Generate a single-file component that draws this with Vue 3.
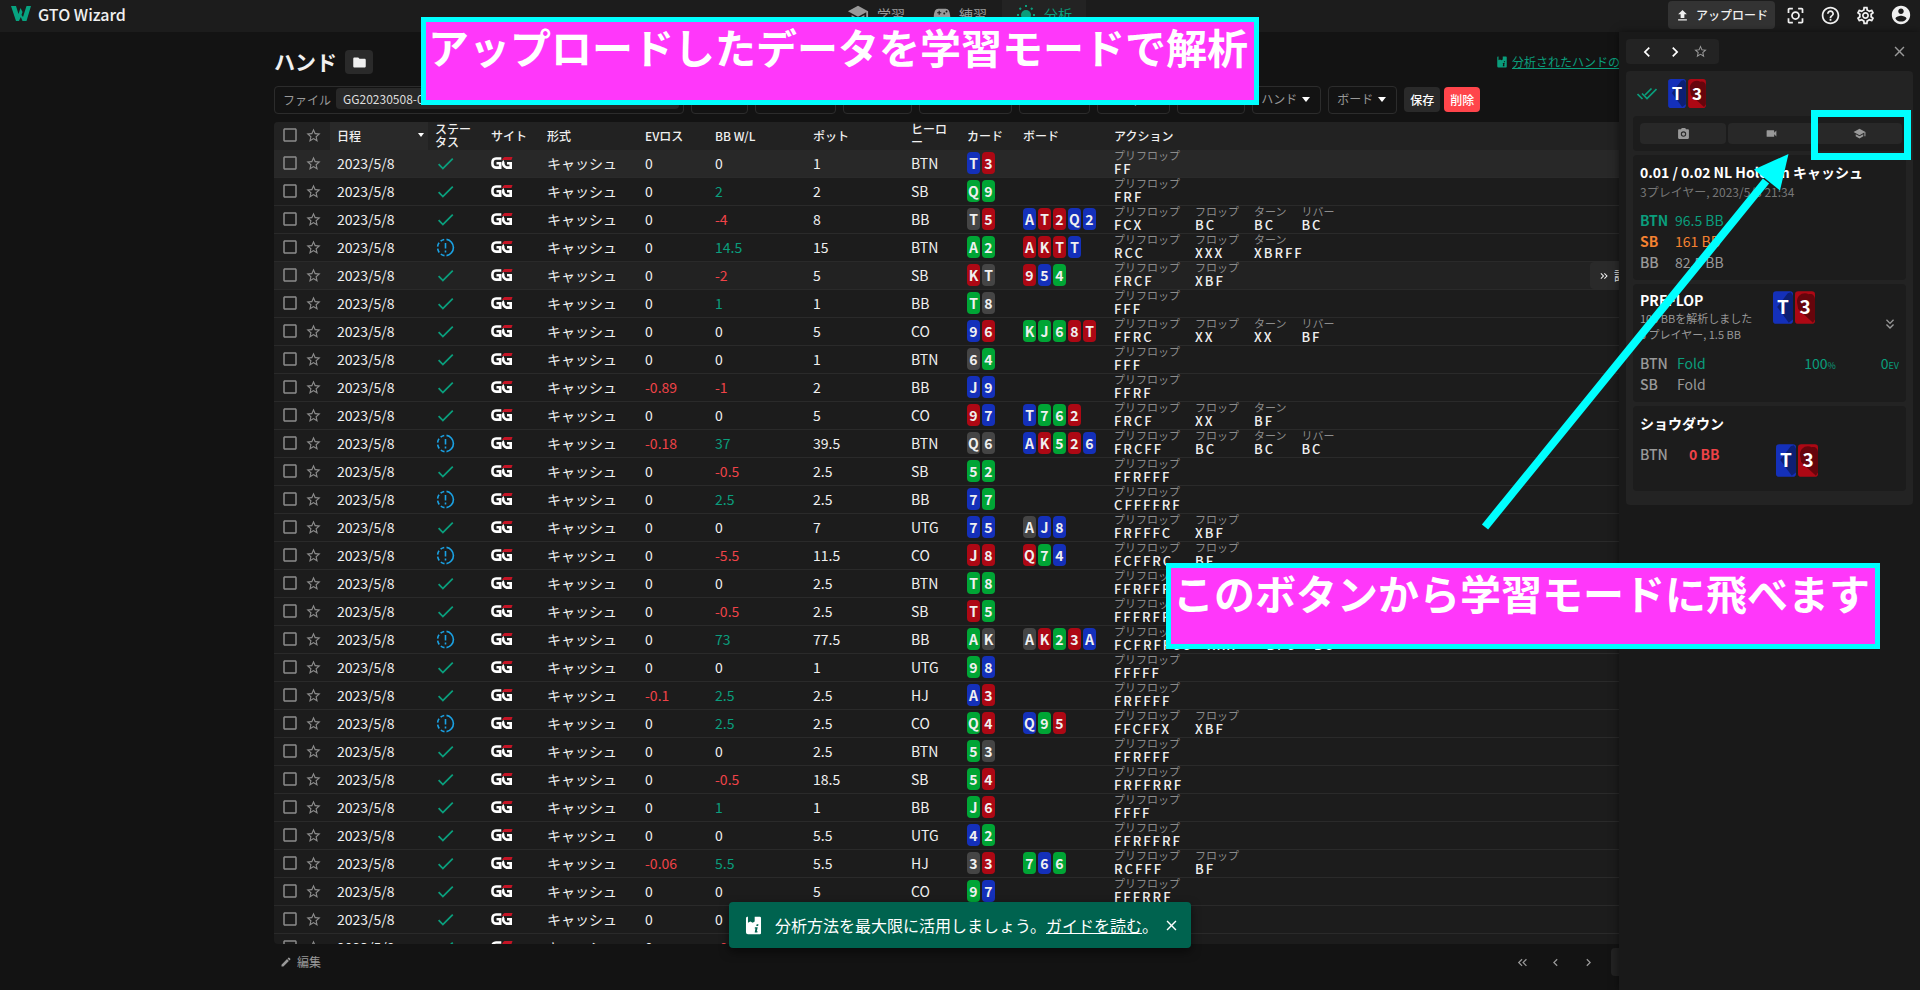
<script setup>
import { h } from 'vue'

const suitNames = { b: 'diamond', r: 'heart', g: 'club', k: 'spade' }
const streetNames = ['プリフロップ', 'フロップ', 'ターン', 'リバー']

// status | EV loss | BB won/lost | pot | hero | hole cards | board | actions per street
const source = [
  'ok|0|0|1|BTN|Tb 3r||FF',
  'ok|0|2|2|SB|Qg 9g||FRF',
  'ok|0|-4|8|BB|Tk 5r|Ab Tr 2r Qb 2b|FCX BC BC BC',
  'part|0|14.5|15|BTN|Ag 2g|Ar Kr Tr Tb|RCC XXX XBRFF',
  'ok|0|-2|5|SB|Kr Tk|9r 5b 4g|FRCF XBF',
  'ok|0|1|1|BB|Tg 8k||FFF',
  'ok|0|0|5|CO|9b 6r|Kg Jg 6g 8r Tr|FFRC XX XX BF',
  'ok|0|0|1|BTN|6k 4g||FFF',
  'ok|-0.89|-1|2|BB|Jb 9b||FFRF',
  'ok|0|0|5|CO|9r 7b|Tb 7g 6g 2r|FRCF XX BF',
  'part|-0.18|37|39.5|BTN|Qk 6k|Ab Kr 5g 2r 6b|FRCFF BC BC BC',
  'ok|0|-0.5|2.5|SB|5g 2g||FFRFFF',
  'part|0|2.5|2.5|BB|7b 7g||CFFFFRF',
  'ok|0|0|7|UTG|7b 5b|Ak Jb 8b|FRFFFC XBF',
  'part|0|-5.5|11.5|CO|Jr 8r|Qr 7g 4b|FCFFRC BF',
  'ok|0|0|2.5|BTN|Tg 8g||FFRFFF',
  'ok|0|-0.5|2.5|SB|Tr 5g||FFFRFF',
  'part|0|73|77.5|BB|Ag Kk|Ak Kr 2g 3r Ab|FCFRFFCC XXX BFC BC',
  'ok|0|0|1|UTG|9g 8b||FFFFF',
  'ok|-0.1|2.5|2.5|HJ|Ab 3r||FRFFFF',
  'part|0|2.5|2.5|CO|Qg 4r|Qb 9g 5r|FFCFFX XBF',
  'ok|0|0|2.5|BTN|5g 3k||FFRFFF',
  'ok|0|-0.5|18.5|SB|5g 4r||FRFFRRF',
  'ok|0|1|1|BB|Jg 6r||FFFF',
  'ok|0|0|5.5|UTG|4b 2g||FFRFFRF',
  'ok|-0.06|5.5|5.5|HJ|3k 3r|7g 6b 6g|RCFFF BF',
  'ok|0|0|5|CO|9g 7b||FFFRRF',
  'ok|0|0|2.5||||',
  'ok|0|-0.5|2.5||||'
]
const split = (s) => (s ? s.split(' ') : [])
const cards = (s) => split(s).map((c) => ({ rank: c[0], suit: suitNames[c[1]] }))
const hands = source.map((line) => {
  const [status, ev, bb, pot, hero, hole, board, acts] = line.split('|')
  return {
    status, ev, bb, pot, hero,
    hole: cards(hole),
    board: cards(board),
    streets: split(acts).map((a, i) => ({ name: streetNames[i], acts: a }))
  }
})
const tone = (v) => (Number(v) > 0 ? 'gain' : Number(v) < 0 ? 'loss' : '')

const filters = ['日程', 'ヒーロー', 'サイト', 'ステータス', 'EVロス', 'BB W/L', 'アクト', 'ハンド', 'ボード']

const paths = {
  star: 'M22 9.24l-7.19-.62L12 2 9.19 8.63 2 9.24l5.46 4.73L5.82 21 12 17.27 18.18 21l-1.63-7.03L22 9.24zM12 15.4l-3.76 2.27 1-4.28-3.32-2.88 4.38-.38L12 6.1l1.71 4.04 4.38.38-3.32 2.88 1 4.28L12 15.4z',
  box: 'M19 5v14H5V5h14m0-2H5c-1.1 0-2 .9-2 2v14c0 1.1.9 2 2 2h14c1.1 0 2-.9 2-2V5c0-1.1-.9-2-2-2z',
  check: 'M9 16.17L4.83 12l-1.42 1.41L9 19 21 7l-1.41-1.41z',
  folder: 'M10 4H4c-1.1 0-2 .9-2 2v12c0 1.1.9 2 2 2h16c1.1 0 2-.9 2-2V8c0-1.1-.9-2-2-2h-8l-2-2z',
  school: 'M5 13.18v4L12 21l7-3.82v-4L12 17l-7-3.82zM12 3L1 9l11 6 9-4.91V17h2V9L12 3z',
  game: 'M17 5H7C3 5 1.5 9 1 15c-.3 4 3 5 5 3l2-2h8l2 2c2 2 5.3 1 5-3-.5-6-2-10-6-10zM11 11H9v2H7.5v-2h-2V9.5h2v-2H9v2h2zm4 1.5a1.3 1.3 0 110-2.6 1.3 1.3 0 010 2.6zm3-2.5a1.3 1.3 0 110-2.6 1.3 1.3 0 010 2.6z',
  upload: 'M5 20h14v-2H5v2zM5 10h4v6h6v-6h4l-7-7-7 7z',
  focus: 'M5 15H3v4c0 1.1.9 2 2 2h4v-2H5v-4zM5 5h4V3H5c-1.1 0-2 .9-2 2v4h2V5zm14-2h-4v2h4v4h2V5c0-1.1-.9-2-2-2zm0 16h-4v2h4c1.1 0 2-.9 2-2v-4h-2v4zM12 7c-2.76 0-5 2.24-5 5s2.24 5 5 5 5-2.24 5-5-2.24-5-5-5zm0 8a3 3 0 110-6 3 3 0 010 6z',
  help: 'M11 18h2v-2h-2v2zm1-16C6.48 2 2 6.48 2 12s4.48 10 10 10 10-4.48 10-10S17.52 2 12 2zm0 18c-4.41 0-8-3.59-8-8s3.59-8 8-8 8 3.59 8 8-3.59 8-8 8zm0-14c-2.21 0-4 1.79-4 4h2c0-1.1.9-2 2-2s2 .9 2 2c0 2-3 1.75-3 5h2c0-2.25 3-2.5 3-5 0-2.21-1.79-4-4-4z',
  gear: 'M19.43 12.98c.04-.32.07-.64.07-.98s-.03-.66-.07-.98l2.11-1.65c.19-.15.24-.42.12-.64l-2-3.46c-.12-.22-.39-.3-.61-.22l-2.49 1c-.52-.4-1.08-.73-1.69-.98l-.38-2.65C14.46 2.18 14.25 2 14 2h-4c-.25 0-.46.18-.49.42l-.38 2.65c-.61.25-1.17.59-1.69.98l-2.49-1c-.23-.09-.49 0-.61.22l-2 3.46c-.13.22-.07.49.12.64l2.11 1.65c-.04.32-.07.65-.07.98s.03.66.07.98l-2.11 1.65c-.19.15-.24.42-.12.64l2 3.46c.12.22.39.3.61.22l2.49-1c.52.4 1.08.73 1.69.98l.38 2.65c.03.24.24.42.49.42h4c.25 0 .46-.18.49-.42l.38-2.65c.61-.25 1.17-.59 1.69-.98l2.49 1c.23.09.49 0 .61-.22l2-3.46c.12-.22.07-.49-.12-.64l-2.11-1.65zm-1.98-1.71c.04.31.05.52.05.73s-.02.43-.05.73l-.14 1.13.89.7 1.08.84-.7 1.21-1.27-.51-1.04-.42-.9.68c-.43.32-.84.56-1.25.73l-1.06.43-.16 1.13-.2 1.35h-1.4l-.19-1.35-.16-1.13-1.06-.43c-.43-.18-.83-.41-1.23-.71l-.91-.7-1.06.43-1.27.51-.7-1.21 1.08-.84.89-.7-.14-1.13c-.03-.31-.05-.54-.05-.74s.02-.43.05-.73l.14-1.13-.89-.7-1.08-.84.7-1.21 1.27.51 1.04.42.9-.68c.43-.32.84-.56 1.25-.73l1.06-.43.16-1.13.2-1.35h1.39l.19 1.35.16 1.13 1.06.43c.43.18.83.41 1.23.71l.91.7 1.06-.43 1.27-.51.7 1.21-1.07.85-.89.7.14 1.13zM12 8c-2.21 0-4 1.79-4 4s1.79 4 4 4 4-1.79 4-4-1.79-4-4-4zm0 6c-1.1 0-2-.9-2-2s.9-2 2-2 2 .9 2 2-.9 2-2 2z',
  account: 'M12 2C6.48 2 2 6.48 2 12s4.48 10 10 10 10-4.48 10-10S17.52 2 12 2zm0 3c1.66 0 3 1.34 3 3s-1.34 3-3 3-3-1.34-3-3 1.34-3 3-3zm0 14.2c-2.5 0-4.71-1.28-6-3.22.03-1.99 4-3.08 6-3.08 1.99 0 5.97 1.09 6 3.08-1.29 1.94-3.5 3.22-6 3.22z',
  left: 'M15.41 7.41L14 6l-6 6 6 6 1.41-1.41L10.83 12z',
  right: 'M10 6L8.59 7.41 13.17 12l-4.58 4.59L10 18l6-6z',
  close: 'M19 6.41L17.59 5 12 10.59 6.41 5 5 6.41 10.59 12 5 17.59 6.41 19 12 13.41 17.59 19 19 17.59 13.41 12z',
  camera: 'M9 2L7.17 4H4c-1.1 0-2 .9-2 2v14c0 1.1.9 2 2 2h16c1.1 0 2-.9 2-2V6c0-1.1-.9-2-2-2h-3.17L15 2H9zm3 16a5 5 0 110-10 5 5 0 010 10zm0-2a3 3 0 100-6 3 3 0 000 6z',
  video: 'M17 10.5V7c0-.55-.45-1-1-1H4c-.55 0-1 .45-1 1v10c0 .55.45 1 1 1h12c.55 0 1-.45 1-1v-3.5l4 4v-11l-4 4z',
  book: 'M5 1V8.500l3-1.500 3 1.500 2.500-1.500V1H20a1.500 1.500 0 011.500 1.500V21.500A1.500 1.500 0 0120 23H5a2.500 2.500 0 01-2.500-2.500V3A2 2 0 014 1zM16 10.500l-.5 2.200h2.300l.5-2.200zm-2.200 3.700l-.3 1.500h1l-1 5h3.400l.3-1.500h-1l1.100-5z',
  pencil: 'M3 17.25V21h3.75L17.81 9.94l-3.75-3.75L3 17.25zM20.71 7.04c.39-.39.39-1.02 0-1.41l-2.34-2.34c-.39-.39-1.02-.39-1.41 0l-1.83 1.83 3.75 3.75 1.83-1.83z',
  doubleRight: 'M6.4 6L5 7.4 9.6 12 5 16.6 6.4 18l6-6zm7 0L12 7.4l4.6 4.6-4.6 4.6 1.4 1.4 6-6z',
  doubleLeft: 'M17.6 6L19 7.4 14.4 12l4.6 4.6-1.4 1.4-6-6zm-7 0L12 7.4 7.4 12l4.6 4.6-1.4 1.4-6-6z',
  doubleDown: 'M18 6.4L16.6 5 12 9.6 7.4 5 6 6.4l6 6zm0 7L16.6 12 12 16.6 7.4 12 6 13.4l6 6z'
}
const Icon = (props) =>
  h('svg', { viewBox: '0 0 24 24', width: props.size, height: props.size, fill: 'currentColor', 'aria-hidden': 'true' }, [
    h('path', { d: paths[props.name], 'fill-rule': 'evenodd' })
  ])
Icon.props = ['name', 'size']

const faces = {
  T: { fill: '#1430ba', shade: '#0d1f73', d: 'M4 15 14 2 17 1 19 4V27L15 30Z' },
  3: { fill: '#ad0814', shade: '#66050c', d: 'M2 11C1 3 9 0 13 3 16 2 19 4 19 8V27L17 30 3 17Z' }
}
const BigCard = (props) =>
  h('svg', { viewBox: '0 0 19 31', width: props.size, height: Math.round((props.size * 31) / 19), role: 'img', 'aria-label': props.rank }, [
    h('rect', { width: 19, height: 31, rx: 3, fill: faces[props.rank].fill }),
    h('path', { d: faces[props.rank].d, fill: faces[props.rank].shade }),
    h('text', { x: 9.5, y: 22, 'text-anchor': 'middle', fill: '#fff', 'font-size': 18, 'font-weight': 700 }, props.rank)
  ])
BigCard.props = ['rank', 'size']
</script>

<template>
  <div class="page">
    <header class="top">
      <a class="brand" href="#">
        <svg width="20" height="16" viewBox="0 0 20 16" aria-hidden="true">
          <path d="M0 0h5l2.500 8L9.500 2l2 4-1 3 1.500 2L15.500 0H20l-4.500 15h-4L9.800 11 8 15H5z" fill="#07a380" />
        </svg>
        <span>GTO Wizard</span>
      </a>
      <nav class="tabs">
        <a href="#"><Icon name="school" :size="22" /><span>学習</span></a>
        <a href="#"><Icon name="game" :size="18" /><span>練習</span></a>
        <a href="#" class="on">
          <svg width="20" height="20" viewBox="0 0 20 20" aria-hidden="true" fill="none" stroke="currentColor" stroke-width="2">
            <circle cx="10" cy="11" r="5" fill="currentColor" stroke="none" />
            <path d="M10 1v2M3.500 4l1.500 1.500M16.500 4L15 5.500M1 11h2M17 11h2M7 17h6" />
          </svg>
          <span>分析</span>
        </a>
      </nav>
      <div class="tools">
        <button class="upload"><Icon name="upload" :size="15" /><span>アップロード</span></button>
        <button aria-label="スクリーン"><Icon name="focus" :size="21" /></button>
        <button aria-label="ヘルプ"><Icon name="help" :size="21" /></button>
        <button aria-label="設定"><Icon name="gear" :size="21" /></button>
        <button aria-label="アカウント"><Icon name="account" :size="22" /></button>
      </div>
    </header>

    <main class="main">
      <div class="heading">
        <h1>ハンド</h1>
        <button class="folder" aria-label="フォルダ"><Icon name="folder" :size="15" /></button>
        <a class="guide" href="#"><Icon name="book" :size="12" /><span>分析されたハンドの見方</span></a>
      </div>

      <div class="filters">
        <div class="file"><span>ファイル</span><button class="chip">GG20230508-0407</button></div>
        <button v-for="f in filters" :key="f" class="filter">
          <span>{{ f }}</span>
          <svg width="8" height="5" viewBox="0 0 8 5" aria-hidden="true"><path d="M0 0h8L4 5z" fill="#fff" /></svg>
        </button>
        <div class="pair">
          <button class="save">保存</button>
          <button class="delete">削除</button>
        </div>
      </div>

      <div class="sheet">
        <table>
          <colgroup>
            <col class="w-pick" /><col class="w-l" /><col class="w-s" /><col class="w-s" /><col class="w-l" />
            <col class="w-m" /><col class="w-l" /><col class="w-l" /><col class="w-s" /><col class="w-s" />
            <col class="w-b" /><col />
          </colgroup>
          <thead>
            <tr>
              <th>
                <div class="pick">
                  <label class="tick"><input type="checkbox" aria-label="すべて選択" /><Icon name="box" :size="18" /></label>
                  <button aria-label="お気に入り"><Icon name="star" :size="17" /></button>
                </div>
              </th>
              <th class="sorted">
                <div class="sort"><span>日程</span><svg width="6" height="4" viewBox="0 0 6 4" aria-hidden="true"><path d="M0 0h6L3 4z" fill="#fff" /></svg></div>
              </th>
              <th>ステータス</th><th>サイト</th><th>形式</th><th>EVロス</th><th>BB W/L</th><th>ポット</th>
              <th>ヒーロー</th><th>カード</th><th>ボード</th><th>アクション</th>
            </tr>
          </thead>
          <tbody>
            <tr v-for="(r, i) in hands" :key="i" :class="{ selected: i === 0, hover: i === 4 }">
              <td>
                <div class="pick">
                  <label class="tick"><input type="checkbox" :aria-label="'ハンド ' + (i + 1)" /><Icon name="box" :size="18" /></label>
                  <button aria-label="お気に入り"><Icon name="star" :size="17" /></button>
                </div>
              </td>
              <td>2023/5/8</td>
              <td class="status">
                <Icon v-if="r.status === 'ok'" name="check" :size="21" />
                <svg v-else class="part" width="20" height="19" viewBox="-1 0 20 19" fill="none" stroke="currentColor" stroke-width="1.600" aria-hidden="true">
                  <path d="M10.500 1.400A8.200 8.200 0 0110.500 17.600" />
                  <path d="M8.500 17.600A8.200 8.200 0 018.500 1.400" stroke-dasharray="4 2.200" />
                  <path d="M9.500 5v5.500M9.500 12.500v2" />
                </svg>
              </td>
              <td class="site">
                <svg width="22" height="12" viewBox="0 0 22 12" role="img" aria-label="GG" fill="none" stroke="#fff" stroke-width="2.600">
                  <path d="M10.300 1.500H5Q1.400 1.500 1.400 6T5 10.600H9.200V6.300H5.500" />
                  <path d="M13 4.200Q12.200 4.500 12.200 6.800T15.500 10.600H19.700V6.300H16" />
                  <path d="M13.500 0H21.500L20.500 3H11Q12 .5 13.500 0z" fill="#c41425" stroke="none" />
                </svg>
              </td>
              <td>キャッシュ</td>
              <td :class="tone(r.ev)">{{ r.ev }}</td>
              <td :class="tone(r.bb)">{{ r.bb }}</td>
              <td>{{ r.pot }}</td>
              <td>{{ r.hero }}</td>
              <td><div class="cards"><b v-for="(c, n) in r.hole" :key="n" :class="c.suit">{{ c.rank }}</b></div></td>
              <td><div class="cards"><b v-for="(c, n) in r.board" :key="n" :class="c.suit">{{ c.rank }}</b></div></td>
              <td class="action">
                <div class="streets">
                  <div v-for="s in r.streets" :key="s.name"><small>{{ s.name }}</small><em>{{ s.acts }}</em></div>
                </div>
                <button v-if="i === 4" class="detail"><Icon name="doubleRight" :size="12" /><span>詳細</span></button>
              </td>
            </tr>
          </tbody>
        </table>
      </div>

      <footer class="foot">
        <button class="edit"><Icon name="pencil" :size="12" /><span>編集</span></button>
        <div class="pager">
          <button aria-label="最初"><Icon name="doubleLeft" :size="15" /></button>
          <button aria-label="前へ"><Icon name="left" :size="15" /></button>
          <button aria-label="次へ"><Icon name="right" :size="15" /></button>
          <button class="current" aria-label="現在のページ"></button>
        </div>
      </footer>
    </main>

    <aside class="panel">
      <div class="panel-bar">
        <div class="steps">
          <button aria-label="前のハンド"><Icon name="left" :size="20" /></button>
          <button aria-label="次のハンド"><Icon name="right" :size="20" /></button>
          <button aria-label="お気に入り" class="dim fav"><Icon name="star" :size="15" /></button>
        </div>
        <button class="dim" aria-label="閉じる"><Icon name="close" :size="17" /></button>
      </div>
      <section class="card">
        <div class="hole">
          <svg width="20" height="13" viewBox="0 0 20 13" fill="none" stroke="#0a9e7c" stroke-width="1.700" aria-hidden="true">
            <path d="M.5 7l5 5M5 6.500l5 5L19.500 2M8 8L14.500 1.500" />
          </svg>
          <div class="duo"><BigCard rank="T" :size="18" /><BigCard rank="3" :size="18" /></div>
        </div>
        <div class="box media">
          <button aria-label="画像"><Icon name="camera" :size="13" /></button>
          <button aria-label="動画"><Icon name="video" :size="13" /></button>
          <button aria-label="学習"><Icon name="school" :size="13" /></button>
        </div>
        <div class="box info">
          <h2>0.01 / 0.02 NL Holdem キャッシュ</h2>
          <p class="when">3プレイヤー, 2023/5/8 21:34</p>
          <dl>
            <div class="green"><dt>BTN</dt><dd>96.5 BB</dd></div>
            <div class="orange"><dt>SB</dt><dd>161 BB</dd></div>
            <div><dt>BB</dt><dd>82.5 BB</dd></div>
          </dl>
        </div>
        <div class="box preflop">
          <div class="row">
            <div class="about">
              <h2>PREFLOP</h2>
              <p>100 BBを解析しました</p>
              <p>3 プレイヤー, 1.5 BB</p>
            </div>
            <div class="duo"><BigCard rank="T" :size="20" /><BigCard rank="3" :size="20" /></div>
            <button class="dim more" aria-label="展開"><Icon name="doubleDown" :size="16" /></button>
          </div>
          <dl>
            <div><dt>BTN</dt><dd class="green">Fold</dd><dd class="green pct">100<small>%</small></dd><dd class="green">0<small>EV</small></dd></div>
            <div><dt>SB</dt><dd>Fold</dd></div>
          </dl>
        </div>
        <div class="box show">
          <h2>ショウダウン</h2>
          <div class="row">
            <span class="seat">BTN</span><strong>0 BB</strong>
            <div class="duo"><BigCard rank="T" :size="20" /><BigCard rank="3" :size="20" /></div>
          </div>
        </div>
      </section>
    </aside>

    <div class="toast" role="status">
      <Icon name="book" :size="19" />
      <p>分析方法を最大限に活用しましょう。<a href="#">ガイドを読む</a>。</p>
      <button aria-label="閉じる"><Icon name="close" :size="17" /></button>
    </div>

    <div class="callout first">アップロードしたデータを学習モードで解析</div>
    <div class="callout second">このボタンから学習モードに飛べます</div>
    <div class="ring"></div>
    <svg class="arrow" width="310" height="380" viewBox="0 0 310 380" aria-hidden="true">
      <path d="M5 377 286 31" stroke="#0ff" stroke-width="8" />
      <path d="M308.500 4 274 19.500 300 40.500z" fill="#0ff" />
    </svg>
  </div>
</template>

<style>
body { background: #131313; overflow: hidden; }
</style>

<style scoped>
.page {
  position: relative; display: flex; flex-direction: column; height: 100vh; overflow: hidden;
  background: #131313; color: #f0f0f0;
  font-family: "Noto Sans CJK JP", "Noto Sans", sans-serif; font-size: 14px; line-height: 20px;
}
.page * { box-sizing: border-box; }
button { font: inherit; color: inherit; background: none; border: 0; padding: 0; display: flex; align-items: center; justify-content: center; white-space: nowrap; }
a { color: inherit; text-decoration: none; }
h1, h2, p, dl, dd { margin: 0; }
svg { display: block; flex: none; }

.top { display: grid; grid-template-columns: 1fr auto 1fr; height: 32px; background: #1c1c1c; flex: none; }
.brand { display: flex; align-items: center; gap: 7px; padding-left: 11px; padding-bottom: 4px; font-size: 16px; font-weight: 500; }
.tabs { display: flex; }
.tabs a { width: 84px; height: 32px; padding-bottom: 4px; display: flex; align-items: center; justify-content: center; gap: 8px; color: #999; }
.tabs a.on { background: #232323; color: #0a9e7c; }
.tools { display: flex; justify-content: flex-end; padding: 1px 2px 3px 0; }
.tools button { width: 35px; height: 28px; }
.tools .upload { width: 107px; margin-right: 3px; gap: 6px; background: #333; border-radius: 4px; font-size: 12px; font-weight: 500; }

.main { width: 100%; max-width: 1372px; margin: 0 auto; flex: 1; min-height: 0; display: flex; flex-direction: column; padding-top: 16px; }
.heading { display: flex; align-items: center; height: 28px; flex: none; }
h1 { font-size: 21px; line-height: 26px; padding-bottom: 2px; font-weight: 700; }
.folder { width: 28px; height: 24px; margin-left: 8px; background: #2a2a2a; border-radius: 4px; }
.guide { margin-left: auto; margin-right: 2px; display: flex; align-items: center; gap: 4px; color: #0a9e7c; font-size: 12px; }
.guide span { text-decoration: underline; }

.filters { display: flex; gap: 7px; margin-top: 10px; height: 28px; flex: none; font-size: 12px; color: #999; }
.file, .filter { border: 1px solid #2c2c2c; border-radius: 4px; }
.file { display: flex; padding: 1px 4px 0 8px; gap: 5px; line-height: 24px; }
.chip { width: 343px; height: 21px; padding-left: 7px; justify-content: flex-start; background: #282828; color: #ddd; border-radius: 4px; }
.filter { padding: 0 10px 2px 8px; gap: 5px; }
.pair { display: flex; gap: 4px; padding-top: 1px; font-weight: 500; color: #fff; }
.pair button { height: 25px; padding: 0 6px; border-radius: 4px; }
.save { background: #2a2a2a; }
.delete { background: #ff454b; }

.sheet { margin-top: 8px; flex: 1; min-height: 0; overflow: hidden; background: #1c1c1c; border-radius: 4px; }
table { width: 100%; table-layout: fixed; border-collapse: collapse; }
.w-pick { width: 56px; } .w-s { width: 56px; } .w-m { width: 70px; } .w-b { width: 91px; } .w-l { width: 98px; }
th { height: 28px; padding: 0 7px 2px; background: #222; font-size: 12px; line-height: 13px; font-weight: 500; text-align: left; }
th.sorted { background: #292929; padding-right: 4px; }
.sort { display: flex; align-items: center; justify-content: space-between; }
td { height: 28px; padding: 0 7px 2px; line-height: 20px; white-space: nowrap; box-shadow: inset 0 -1px #2a2a2a; }
tr.selected td { background: #282828; }
tr.hover td { background: #222; }
.pick { display: flex; align-items: center; gap: 6px; color: #8c8c8c; }
.tick { position: relative; display: block; }
.tick input { position: absolute; inset: 0; margin: 0; opacity: 0; }
.status { color: #0a9e7c; }
.part { color: #1aa2e4; }
.gain { color: #0a9e7c; }
.loss { color: #ef4348; }
.cards { display: flex; gap: 2px; }
.cards b { width: 13px; height: 22px; border-radius: 4px; line-height: 22px; font-size: 14px; text-align: center; }
.diamond { background: #1430ba; } .heart { background: #ad0814; } .club { background: #00a535; } .spade { background: #454545; }
td.action { position: relative; padding-bottom: 0; }
.streets { display: flex; gap: 15px; }
.streets small { display: block; font-size: 11px; line-height: 10px; color: #8c8c8c; }
.streets em { display: block; font-style: normal; font-size: 13px; line-height: 18px; font-weight: 500; letter-spacing: 2px; }
.detail { position: absolute; right: 0; top: 0; width: 56px; height: 27px; gap: 4px; background: #2a2a2a; border-radius: 4px; font-size: 12px; }

.foot { display: flex; justify-content: space-between; align-items: center; height: 46px; padding-bottom: 10px; flex: none; font-size: 12px; color: #999; }
.edit { padding-left: 6px; gap: 5px; }
.pager { display: flex; }
.pager button { width: 33px; height: 28px; }
.pager .current { width: 35px; margin-left: 6px; background: #222; border-radius: 4px; }

.panel { position: absolute; top: 32px; right: 0; bottom: 0; width: 301px; padding: 7px; background: #191919; box-shadow: 0 0 8px rgba(0, 0, 0, .5); color: #999; }
.dim { color: #999; }
.panel-bar { display: flex; justify-content: space-between; align-items: center; height: 25px; padding-right: 5px; }
.steps { display: flex; width: 93px; height: 25px; padding: 0 7px; background: #232323; border-radius: 4px; color: #fff; }
.steps button { width: 28px; }
.steps .fav { width: 22px; }
.card { margin-top: 7px; padding: 8px 7px 14px; background: #232323; border-radius: 4px; }
.hole { display: flex; align-items: center; gap: 11px; padding-left: 4px; }
.duo { display: flex; gap: 2px; }
.box { background: #1c1c1c; border-radius: 4px; padding: 7px; margin-top: 4px; }
.media { display: grid; grid-template-columns: repeat(3, 1fr); gap: 2px; margin-top: 8px; padding-right: 4px; }
.media button { height: 21px; background: #282828; border-radius: 4px; }
h2 { font-size: 14px; line-height: 21px; font-weight: 700; color: #fff; white-space: nowrap; }
.when { font-size: 12px; line-height: 18px; color: #777; }
.info dl { margin-top: 9px; }
dl > div { display: flex; height: 21px; line-height: 21px; }
dt, .seat { width: 35px; font-weight: 500; }
.green { color: #0a9e7c; }
.orange { color: #f58231; }
.orange dt, .green dt { font-weight: 700; }
.row { display: flex; }
.about { width: 133px; }
.about h2 { line-height: 19px; }
.about p { font-size: 11px; line-height: 16px; white-space: nowrap; }
.more { margin-left: auto; padding-top: 14px; margin-right: 1px; }
.preflop dl { margin-top: 11px; }
.preflop dt { width: 37px; }
.preflop dd + .pct { margin-left: auto; }
.pct { margin-right: 45px; }
dd small { font-size: 9px; }
.show .row { padding-top: 10px; line-height: 21px; }
.show .duo { margin-left: auto; margin-right: 81px; }
.show strong { margin-left: 14px; font-weight: 700; color: #ef4348; }
.show { padding-bottom: 14px; }

.toast { position: absolute; left: 50%; bottom: 42px; transform: translateX(-50%); display: flex; align-items: center; width: 462px; height: 46px; padding: 0 11px 0 15px; background: #00634f; border-radius: 4px; box-shadow: 0 4px 10px rgba(0, 0, 0, .5); color: #fff; font-size: 16px; white-space: nowrap; }
.toast p { margin-left: 12px; }
.toast p a { text-decoration: underline; }
.toast button { margin-left: auto; }

.callout { position: absolute; padding: 0 2px; border: 5px solid #0ff; background: #ff37fa; color: #fff; font-size: 41px; line-height: 48px; font-weight: 700; white-space: nowrap; }
.first { left: 421px; top: 17px; width: 838px; height: 88px; }
.second { left: 1166px; top: 563px; width: 714px; height: 86px; }
.ring { position: absolute; left: 1811px; top: 110px; width: 100px; height: 50px; border: 7px solid #0ff; }
.arrow { position: absolute; left: 1480px; top: 150px; }
</style>
